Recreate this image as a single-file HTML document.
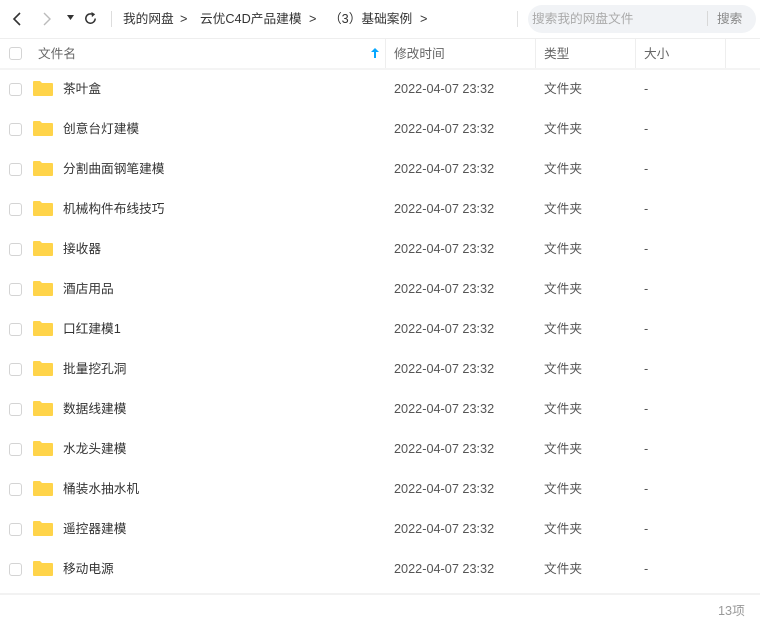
<!DOCTYPE html>
<html><head><meta charset="utf-8"><style>
*{margin:0;padding:0;box-sizing:border-box}
body{width:760px;height:629px;background:#fff;font-family:"Liberation Sans","Noto Sans CJK SC",sans-serif;font-size:12.7px;line-height:16px;color:#333;position:relative;overflow:hidden}
.a{position:absolute;white-space:nowrap;line-height:16px}
.cb{position:absolute;left:9px;width:13px;height:13px;border:1px solid #d4d4d4;border-radius:3px;background:#fff}
.row{position:absolute;left:0;width:760px;height:40px}
.row .cb{top:14px}
.row span{position:absolute;top:12px;line-height:17px;height:17px;white-space:nowrap}
.fold{position:absolute;left:33px;top:12px;width:20px;height:15px}
.nm{left:63px;color:#333}
.tm{left:394px;color:#555}
.tp{left:544px;color:#555}
.sz{left:644px;color:#555}
</style></head><body>
<svg class="a" style="left:10px;top:11px" width="14" height="16" viewBox="0 0 14 16"><path d="M10 2 L4 8 L10 14" fill="none" stroke="#333" stroke-width="1.6"/></svg>
<svg class="a" style="left:40px;top:11px" width="14" height="16" viewBox="0 0 14 16"><path d="M4 2 L10 8 L4 14" fill="none" stroke="#bbb" stroke-width="1.4"/></svg>
<svg class="a" style="left:67px;top:15px" width="8" height="6"><path d="M0 0 L7 0 L3.5 5Z" fill="#333"/></svg>
<svg class="a" style="left:83px;top:11px" width="15" height="15" viewBox="0 0 16 16"><path d="M13 8 A5 5 0 1 1 10.5 3.7" fill="none" stroke="#333" stroke-width="1.6"/><path d="M9 1 L13 3.5 L9.5 6.5Z" fill="#333"/></svg>
<div class="a" style="left:111px;top:11px;width:1px;height:16px;background:#ddd"></div>
<div class="a" style="left:123px;top:11px">我的网盘</div>
<div class="a" style="left:180px;top:11px">&gt;</div>
<div class="a" style="left:200px;top:11px">云优C4D产品建模</div>
<div class="a" style="left:309px;top:11px">&gt;</div>
<div class="a" style="left:329px;top:11px">（3）基础案例</div>
<div class="a" style="left:420px;top:11px">&gt;</div>
<div class="a" style="left:517px;top:11px;width:1px;height:16px;background:#e2e2e2"></div>
<div class="a" style="left:528px;top:5px;width:228px;height:28px;border-radius:14px;background:#f1f3f6"></div>
<div class="a" style="left:532px;top:11px;color:#aaa">搜索我的网盘文件</div>
<div class="a" style="left:707px;top:11px;width:1px;height:15px;background:#d8d8d8"></div>
<div class="a" style="left:717px;top:11px;color:#888">搜索</div>
<div class="a" style="left:0;top:38px;width:760px;height:1px;background:#eee"></div>
<div class="cb" style="top:47px"></div>
<div class="a" style="left:38px;top:46px;color:#666">文件名</div>
<svg class="a" style="left:371px;top:48px" width="8" height="10"><path d="M4 0 L8 4 L5 4 L5 10 L3 10 L3 4 L0 4Z" fill="#06a7ff"/></svg>
<div class="a" style="left:385px;top:38px;width:1px;height:31px;background:#eee"></div>
<div class="a" style="left:394px;top:46px;color:#666">修改时间</div>
<div class="a" style="left:535px;top:38px;width:1px;height:31px;background:#eee"></div>
<div class="a" style="left:544px;top:46px;color:#666">类型</div>
<div class="a" style="left:635px;top:38px;width:1px;height:31px;background:#eee"></div>
<div class="a" style="left:644px;top:46px;color:#666">大小</div>
<div class="a" style="left:725px;top:38px;width:1px;height:31px;background:#eee"></div>
<div class="a" style="left:0;top:68px;width:760px;height:2px;background:#f4f4f4"></div>
<div class="row" style="top:69px"><div class="cb"></div><svg class="fold" viewBox="0 0 20 15"><path d="M0 1 Q0 0 1 0 L7 0 L9 2 L19 2 Q20 2 20 3 L20 14 Q20 15 19 15 L1 15 Q0 15 0 14Z" fill="#ffd44a"/></svg><span class="nm">茶叶盒</span><span class="tm">2022-04-07 23:32</span><span class="tp">文件夹</span><span class="sz">-</span></div>
<div class="row" style="top:109px"><div class="cb"></div><svg class="fold" viewBox="0 0 20 15"><path d="M0 1 Q0 0 1 0 L7 0 L9 2 L19 2 Q20 2 20 3 L20 14 Q20 15 19 15 L1 15 Q0 15 0 14Z" fill="#ffd44a"/></svg><span class="nm">创意台灯建模</span><span class="tm">2022-04-07 23:32</span><span class="tp">文件夹</span><span class="sz">-</span></div>
<div class="row" style="top:149px"><div class="cb"></div><svg class="fold" viewBox="0 0 20 15"><path d="M0 1 Q0 0 1 0 L7 0 L9 2 L19 2 Q20 2 20 3 L20 14 Q20 15 19 15 L1 15 Q0 15 0 14Z" fill="#ffd44a"/></svg><span class="nm">分割曲面钢笔建模</span><span class="tm">2022-04-07 23:32</span><span class="tp">文件夹</span><span class="sz">-</span></div>
<div class="row" style="top:189px"><div class="cb"></div><svg class="fold" viewBox="0 0 20 15"><path d="M0 1 Q0 0 1 0 L7 0 L9 2 L19 2 Q20 2 20 3 L20 14 Q20 15 19 15 L1 15 Q0 15 0 14Z" fill="#ffd44a"/></svg><span class="nm">机械构件布线技巧</span><span class="tm">2022-04-07 23:32</span><span class="tp">文件夹</span><span class="sz">-</span></div>
<div class="row" style="top:229px"><div class="cb"></div><svg class="fold" viewBox="0 0 20 15"><path d="M0 1 Q0 0 1 0 L7 0 L9 2 L19 2 Q20 2 20 3 L20 14 Q20 15 19 15 L1 15 Q0 15 0 14Z" fill="#ffd44a"/></svg><span class="nm">接收器</span><span class="tm">2022-04-07 23:32</span><span class="tp">文件夹</span><span class="sz">-</span></div>
<div class="row" style="top:269px"><div class="cb"></div><svg class="fold" viewBox="0 0 20 15"><path d="M0 1 Q0 0 1 0 L7 0 L9 2 L19 2 Q20 2 20 3 L20 14 Q20 15 19 15 L1 15 Q0 15 0 14Z" fill="#ffd44a"/></svg><span class="nm">酒店用品</span><span class="tm">2022-04-07 23:32</span><span class="tp">文件夹</span><span class="sz">-</span></div>
<div class="row" style="top:309px"><div class="cb"></div><svg class="fold" viewBox="0 0 20 15"><path d="M0 1 Q0 0 1 0 L7 0 L9 2 L19 2 Q20 2 20 3 L20 14 Q20 15 19 15 L1 15 Q0 15 0 14Z" fill="#ffd44a"/></svg><span class="nm">口红建模1</span><span class="tm">2022-04-07 23:32</span><span class="tp">文件夹</span><span class="sz">-</span></div>
<div class="row" style="top:349px"><div class="cb"></div><svg class="fold" viewBox="0 0 20 15"><path d="M0 1 Q0 0 1 0 L7 0 L9 2 L19 2 Q20 2 20 3 L20 14 Q20 15 19 15 L1 15 Q0 15 0 14Z" fill="#ffd44a"/></svg><span class="nm">批量挖孔洞</span><span class="tm">2022-04-07 23:32</span><span class="tp">文件夹</span><span class="sz">-</span></div>
<div class="row" style="top:389px"><div class="cb"></div><svg class="fold" viewBox="0 0 20 15"><path d="M0 1 Q0 0 1 0 L7 0 L9 2 L19 2 Q20 2 20 3 L20 14 Q20 15 19 15 L1 15 Q0 15 0 14Z" fill="#ffd44a"/></svg><span class="nm">数据线建模</span><span class="tm">2022-04-07 23:32</span><span class="tp">文件夹</span><span class="sz">-</span></div>
<div class="row" style="top:429px"><div class="cb"></div><svg class="fold" viewBox="0 0 20 15"><path d="M0 1 Q0 0 1 0 L7 0 L9 2 L19 2 Q20 2 20 3 L20 14 Q20 15 19 15 L1 15 Q0 15 0 14Z" fill="#ffd44a"/></svg><span class="nm">水龙头建模</span><span class="tm">2022-04-07 23:32</span><span class="tp">文件夹</span><span class="sz">-</span></div>
<div class="row" style="top:469px"><div class="cb"></div><svg class="fold" viewBox="0 0 20 15"><path d="M0 1 Q0 0 1 0 L7 0 L9 2 L19 2 Q20 2 20 3 L20 14 Q20 15 19 15 L1 15 Q0 15 0 14Z" fill="#ffd44a"/></svg><span class="nm">桶装水抽水机</span><span class="tm">2022-04-07 23:32</span><span class="tp">文件夹</span><span class="sz">-</span></div>
<div class="row" style="top:509px"><div class="cb"></div><svg class="fold" viewBox="0 0 20 15"><path d="M0 1 Q0 0 1 0 L7 0 L9 2 L19 2 Q20 2 20 3 L20 14 Q20 15 19 15 L1 15 Q0 15 0 14Z" fill="#ffd44a"/></svg><span class="nm">遥控器建模</span><span class="tm">2022-04-07 23:32</span><span class="tp">文件夹</span><span class="sz">-</span></div>
<div class="row" style="top:549px"><div class="cb"></div><svg class="fold" viewBox="0 0 20 15"><path d="M0 1 Q0 0 1 0 L7 0 L9 2 L19 2 Q20 2 20 3 L20 14 Q20 15 19 15 L1 15 Q0 15 0 14Z" fill="#ffd44a"/></svg><span class="nm">移动电源</span><span class="tm">2022-04-07 23:32</span><span class="tp">文件夹</span><span class="sz">-</span></div>
<div class="a" style="left:0;top:593px;width:760px;height:2px;background:#f2f2f2"></div>
<div class="a" style="left:718px;top:603px;color:#999">13项</div>
</body></html>
